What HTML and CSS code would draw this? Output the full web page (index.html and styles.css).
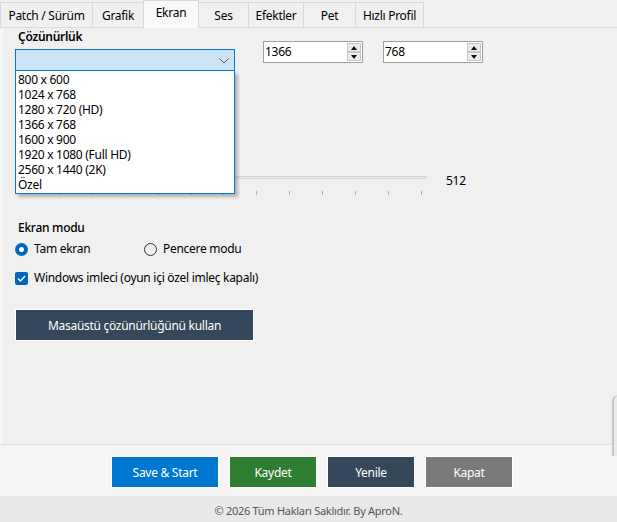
FILE: index.html
```html
<!DOCTYPE html>
<html lang="tr">

<head>
    <meta charset="UTF-8">
    <meta name="viewport" content="width=device-width, initial-scale=1.0">
    <title>Ayarlar - Ekran</title>
    <link rel="stylesheet" href="styles.css">
</head>

<body>
    <div class="window">
        <div class="tabs">
            <div class="tab">Patch / Sürüm</div>
            <div class="tab">Grafik</div>
            <div class="tab active">Ekran</div>
            <div class="tab">Ses</div>
            <div class="tab">Efektler</div>
            <div class="tab">Pet</div>
            <div class="tab">Hızlı Profil</div>
        </div>

        <div class="panel">
            <div class="res-row">
                <div class="res-col">
                    <div class="label strong">Çözünürlük</div>
                    <div class="combo">
                        <svg class="chevron" width="10" height="6" viewBox="0 0 10 6">
                            <path d="M0.5 0.5 L5 5 L9.5 0.5" fill="none" stroke="#555" stroke-width="1"/>
                        </svg>
                        <ul class="combo-list">
                            <li>800 x 600</li>
                            <li>1024 x 768</li>
                            <li>1280 x 720 (HD)</li>
                            <li>1366 x 768</li>
                            <li>1600 x 900</li>
                            <li>1920 x 1080 (Full HD)</li>
                            <li>2560 x 1440 (2K)</li>
                            <li>Özel</li>
                        </ul>
                    </div>
                </div>
                <div class="spin">
                    <span class="spin-value">1366</span>
                    <div class="spin-btns">
                        <div class="spin-btn"><span class="tri up"></span></div>
                        <div class="spin-btn"><span class="tri down"></span></div>
                    </div>
                </div>
                <div class="spin">
                    <span class="spin-value">768</span>
                    <div class="spin-btns">
                        <div class="spin-btn"><span class="tri up"></span></div>
                        <div class="spin-btn"><span class="tri down"></span></div>
                    </div>
                </div>
            </div>

            <div class="slider-row">
                <div class="slider">
                    <div class="track"></div>
                    <div class="ticks">
                        <span></span><span></span><span></span><span></span><span></span>
                        <span></span><span></span><span></span><span></span><span></span>
                        <span></span><span></span><span></span>
                    </div>
                </div>
                <div class="slider-value">512</div>
            </div>

            <div class="label mode-title">Ekran modu</div>
            <div class="radio-row">
                <label class="radio checked"><span class="dot"></span>Tam ekran</label>
                <label class="radio"><span class="dot"></span>Pencere modu</label>
            </div>
            <label class="check">
                <span class="box">
                    <svg width="9" height="7" viewBox="0 0 9 7">
                        <path d="M1 3.5 L3.5 6 L8 1" fill="none" stroke="#fff" stroke-width="1.3"/>
                    </svg>
                </span>
                Windows imleci (oyun içi özel imleç kapalı)
            </label>

            <button class="btn-dark">Masaüstü çözünürlüğünü kullan</button>

            <div class="edge"></div>
        </div>

        <div class="actions">
            <button class="act blue">Save &amp; Start</button>
            <button class="act green">Kaydet</button>
            <button class="act slate">Yenile</button>
            <button class="act gray">Kapat</button>
        </div>

        <div class="footer">© 2026 Tüm Hakları Saklıdır. By AproN.</div>
    </div>
</body>

</html>
```

FILE: styles.css
```css
body {
    margin: 0;
    padding: 0;
    background-color: #f0f0f0;
    font-family: "Noto Sans", "Open Sans", sans-serif;
    font-size: 12px;
    letter-spacing: -0.28px;
    color: #000;
}

.window {
    width: 617px;
    height: 522px;
    display: flex;
    flex-direction: column;
    overflow: hidden;
}

/* tabs */
.tabs {
    display: flex;
    align-items: flex-end;
    height: 28px;
    box-sizing: border-box;
    border-bottom: 1px solid #dcdcdc;
}

.tab {
    height: 25px;
    box-sizing: border-box;
    display: flex;
    align-items: center;
    justify-content: center;
    background-color: #f0f0f0;
    border: 1px solid #dadada;
    border-bottom: none;
    margin-left: -1px;
    white-space: nowrap;
}

.tab:nth-child(1) { width: 93px; margin-left: 0; }
.tab:nth-child(2) { width: 52px; }
.tab:nth-child(3) { width: 56px; }
.tab:nth-child(4) { width: 51px; }
.tab:nth-child(5) { width: 56px; }
.tab:nth-child(6) { width: 53px; }
.tab:nth-child(7) { width: 69px; }

.tab.active {
    height: 28px;
    margin-bottom: -1px;
    padding-bottom: 4px;
    background-color: #f9f9f9;
    position: relative;
    z-index: 1;
}

/* panel */
.panel {
    position: relative;
    height: 420px;
    padding: 1px 0 0 12px;
    box-sizing: border-box;
    border-left: 3px solid #f8f8f8;
}

.label {
    line-height: 16px;
    padding-left: 3px;
}

.strong {
    font-weight: 600;
}

.res-row {
    display: flex;
    align-items: flex-start;
}

.res-col {
    width: 220px;
}

.combo {
    position: relative;
    margin-top: 4px;
    height: 22px;
    box-sizing: border-box;
    border: 1px solid #0078d7;
    background-color: #cce4f7;
}

.chevron {
    position: absolute;
    right: 5px;
    top: 8px;
}

.combo-list {
    position: absolute;
    left: -1px;
    top: 21px;
    width: 220px;
    box-sizing: border-box;
    margin: 0;
    padding: 1px 0;
    list-style: none;
    background-color: #fff;
    border: 1px solid #0078d7;
    border-top: none;
    box-shadow: 3px 3px 3px rgba(0, 0, 0, 0.25);
    z-index: 5;
}

.combo-list li {
    height: 15px;
    line-height: 16px;
    padding-left: 2px;
}

.spin {
    margin-top: 12px;
    margin-left: 28px;
    width: 100px;
    height: 22px;
    box-sizing: border-box;
    border: 1px solid #a0a0a0;
    background-color: #fff;
    display: flex;
    justify-content: space-between;
}

.spin + .spin {
    margin-left: 20px;
}

.spin-value {
    line-height: 20px;
    padding-left: 1px;
}

.spin-btns {
    display: flex;
    flex-direction: column;
    padding: 1px 1px 1px 0;
}

.spin-btn {
    width: 14px;
    height: 9px;
    box-sizing: border-box;
    border: 1px solid #c9c9c9;
    background-color: #ececec;
    display: flex;
    align-items: center;
    justify-content: center;
}

.tri {
    width: 0;
    height: 0;
    border-left: 3px solid transparent;
    border-right: 3px solid transparent;
}

.tri.up {
    border-bottom: 4px solid #111;
}

.tri.down {
    border-top: 4px solid #111;
}

/* slider */
.slider-row {
    display: flex;
    margin-top: 99px;
    margin-left: 5px;
}

.slider {
    width: 407px;
    padding-top: 6px;
}

.track {
    height: 3px;
    box-sizing: border-box;
    border: 1px solid #d8d8d8;
    background-color: #e8e8e8;
}

.ticks {
    display: flex;
    justify-content: space-between;
    margin-top: 12px;
    padding: 0 5px 0 6px;
}

.ticks span {
    width: 1px;
    height: 4px;
    background-color: #b5b5b5;
}

.slider-value {
    margin-left: 19px;
    margin-top: 3px;
    line-height: 16px;
}

/* mode */
.mode-title {
    margin-top: 25px;
    font-weight: 500;
}

.radio-row {
    display: flex;
    margin-top: 5px;
}

.radio,
.check {
    display: flex;
    align-items: center;
    line-height: 16px;
}

.radio {
    width: 129px;
}

.dot {
    width: 13px;
    height: 13px;
    box-sizing: border-box;
    border-radius: 50%;
    border: 1px solid #333;
    margin-right: 6px;
    display: flex;
    align-items: center;
    justify-content: center;
}

.radio.checked .dot {
    border: none;
    background-color: #0067c0;
}

.radio.checked .dot::after {
    content: "";
    width: 5px;
    height: 5px;
    border-radius: 50%;
    background-color: #fff;
}

.check {
    margin-top: 13px;
}

.box {
    width: 13px;
    height: 13px;
    border-radius: 2px;
    background-color: #0067c0;
    margin-right: 6px;
    display: flex;
    align-items: center;
    justify-content: center;
}

.btn-dark {
    display: block;
    margin-top: 23px;
    width: 239px;
    height: 32px;
    border: 1px solid #fff;
    background-color: #35475a;
    color: #fff;
    font-family: inherit;
    font-size: 12px;
    letter-spacing: -0.28px;
}

.edge {
    position: absolute;
    right: -3px;
    top: 367px;
    width: 6px;
    height: 60px;
    border-left: 2px solid #c6c6c6;
    border-top: 1px solid #d6d6d6;
    border-top-left-radius: 6px;
    background-color: #ebebeb;
}

/* bottom bar */
.actions {
    height: 52px;
    box-sizing: border-box;
    border-top: 1px solid #e2e2e2;
    background-color: #f5f5f5;
    display: flex;
    justify-content: center;
    gap: 10px;
    padding: 11px 0 0 7px;
}

.act {
    height: 32px;
    width: 88px;
    border: 1px solid #fff;
    color: #fff;
    font-family: inherit;
    font-size: 12px;
    letter-spacing: -0.28px;
}

.act.blue { width: 108px; background-color: #0078cf; }
.act.green { background-color: #2e7d32; }
.act.slate { background-color: #35475a; }
.act.gray { background-color: #7a7a7a; }

.footer {
    flex: 1;
    background-color: #e9e9e9;
    color: #555;
    font-size: 11px;
    text-align: center;
    line-height: 22px;
    padding-top: 4px;
}
```
